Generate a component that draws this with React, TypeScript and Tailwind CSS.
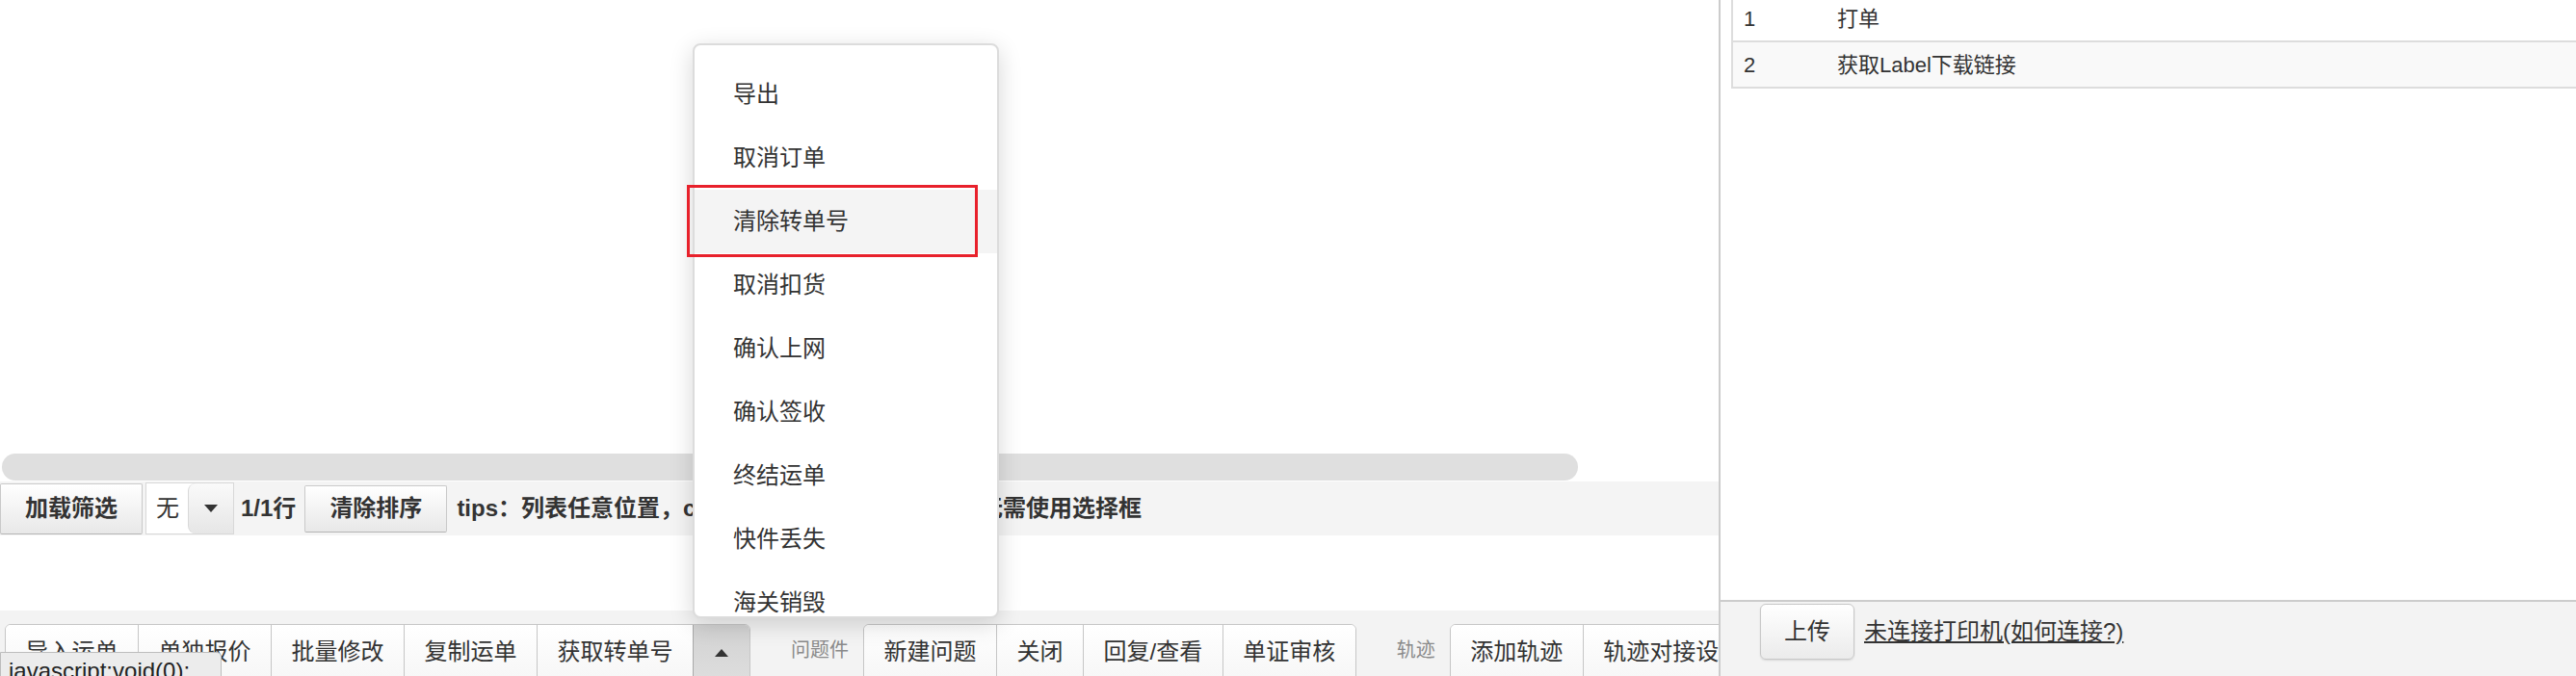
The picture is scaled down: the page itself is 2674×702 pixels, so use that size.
import React from "react";

const MENU = ["导出", "取消订单", "清除转单号", "取消扣货", "确认上网", "确认签收", "终结运单", "快件丢失", "海关销毁"];

const GROUP_ORDER = ["导入运单", "单独报价", "批量修改", "复制运单", "获取转单号"];
const GROUP_ISSUE = ["新建问题", "关闭", "回复/查看", "单证审核"];
const GROUP_TRACK = ["添加轨迹", "轨迹对接设置"];

function Caret({ up }: { up?: boolean }) {
  return (
    <svg width="14" height="8" viewBox="0 0 14 8" className="block">
      <path d={up ? "M7 0L14 8H0Z" : "M0 0H14L7 8Z"} fill="#333" />
    </svg>
  );
}

function ToolGroup({ items, children }: { items: string[]; children?: React.ReactNode }) {
  return (
    <div className="flex shrink-0 h-[62px] border border-[#c6c6c6] rounded-t-[6px] overflow-hidden bg-white">
      {items.map((label, i) => (
        <button
          key={label}
          className={`h-full px-[20.5px] pb-[4px] leading-[26px] text-[24px] text-[#333] bg-linear-to-b from-white to-[#f6f6f6] whitespace-nowrap ${
            i > 0 ? "border-l border-[#c6c6c6]" : ""
          }`}
        >
          {label}
        </button>
      ))}
      {children}
    </div>
  );
}

function ToolLabel({ text }: { text: string }) {
  return (
    <span className="shrink-0 ml-[42px] mr-[15px] mt-[14px] text-[20px] leading-[26px] text-[#8a8a8a] whitespace-nowrap">
      {text}
    </span>
  );
}

export default function App() {
  return (
    <div className="relative w-[2674px] h-[702px] overflow-hidden bg-white flex font-['Liberation_Sans','Noto_Sans_CJK_SC',sans-serif] text-[#333]">
      {/* left: waybill list */}
      <div className="w-[1784px] h-full shrink-0 flex flex-col overflow-hidden">
        <div className="h-[471px] shrink-0" />

        {/* horizontal scrollbar */}
        <div className="h-[28px] shrink-0 ml-[2px] w-[1636px] rounded-full bg-[#dfdfdf]" />

        {/* filter bar */}
        <div className="mt-[1px] h-[56px] shrink-0 bg-[#f4f4f4] flex items-center whitespace-nowrap">
          <button className="h-[53px] px-[25px] border border-[#c9c9c9] border-b-[#b5b5b5] rounded-[2px] bg-linear-to-b from-white to-[#e8e8e8] font-bold text-[24px]">
            加载筛选
          </button>
          <div className="ml-[3px] h-[54px] flex border border-[#d8d8d8] bg-white">
            <span className="w-[43px] pl-[10px] flex items-center text-[24px]">无</span>
            <span className="w-[47px] h-full rounded-l-[8px] border-l border-[#d8d8d8] bg-linear-to-b from-[#fafafa] to-[#e6e6e6] flex items-center justify-center">
              <Caret />
            </span>
          </div>
          <span className="ml-[7px] font-bold text-[24px]">1/1行</span>
          <button className="ml-[9px] h-[49px] px-[25px] border border-[#c9c9c9] border-b-[#b5b5b5] rounded-[2px] bg-linear-to-b from-white to-[#e8e8e8] font-bold text-[24px]">
            清除排序
          </button>
          <span className="ml-[10px] font-bold text-[24px]">
            tips：列表任意位置，ctrl+点击多选、shift+连选，无需使用选择框
          </span>
        </div>

        <div className="h-[78px] shrink-0" />

        {/* bottom action toolbar */}
        <div className="flex-1 bg-[#f3f3f3] pt-[14px] pl-[5px] flex items-start">
          <ToolGroup items={GROUP_ORDER}>
            <button className="w-[59px] h-full border-l border-[#a9a9a9] bg-linear-to-b from-[#d2d2d2] to-[#dedede] flex justify-center pt-[25px]">
              <Caret up />
            </button>
          </ToolGroup>
          <ToolLabel text="问题件" />
          <ToolGroup items={GROUP_ISSUE} />
          <ToolLabel text="轨迹" />
          <ToolGroup items={GROUP_TRACK} />
        </div>
      </div>

      {/* splitter */}
      <div className="w-[2px] h-full shrink-0 bg-[#cccccc]" />

      {/* right: print tasks */}
      <div className="flex-1 h-full flex flex-col">
        <div className="ml-[11px] -mt-[4px] border-l-2 border-[#dddddd] text-[22px]">
          <div className="h-[48px] flex items-center border-b-2 border-[#dddddd]">
            <span className="w-[97px] pl-[11px]">1</span>
            <span className="pl-[11px]">打单</span>
          </div>
          <div className="h-[48px] flex items-center border-b-2 border-[#dddddd] bg-[#f9f9f9]">
            <span className="w-[97px] pl-[11px]">2</span>
            <span className="pl-[11px]">获取Label下载链接</span>
          </div>
        </div>
        <div className="flex-1" />
        <div className="h-[79px] shrink-0 border-t-2 border-[#cccccc] bg-[#f3f3f3] pl-[41px] pt-[2px]">
          <div className="h-[58px] flex items-center">
            <button className="w-[98px] h-[58px] rounded-[6px] border border-[#c8c8c8] bg-linear-to-b from-white to-[#ebebeb] shadow-[0_1px_2px_rgba(0,0,0,0.12)] text-[24px]">
              上传
            </button>
            <a className="ml-[10px] text-[24px] text-[#333] underline whitespace-nowrap" href="#">
              未连接打印机(如何连接?)
            </a>
          </div>
        </div>
      </div>

      {/* opened "more" menu */}
      <div className="absolute left-[719px] top-[45px] w-[318px] h-[597px] bg-white border-2 border-[#dcdcdc] rounded-[8px] shadow-[0_6px_24px_rgba(0,0,0,0.16)] overflow-hidden pt-[18px]">
        {MENU.map((m, i) => (
          <div
            key={m}
            className={`h-[66px] shrink-0 flex items-center pl-[40px] text-[24px] text-[#333] ${i === 2 ? "bg-[#f4f4f4]" : ""}`}
          >
            {m}
          </div>
        ))}
      </div>

      {/* red annotation */}
      <div className="absolute left-[713px] top-[192px] w-[302px] h-[75px] border-[3px] border-[#e8212b]" />

      {/* browser status bubble */}
      <div className="absolute left-0 top-[677px] w-[230px] h-[40px] bg-[#ececec] border border-[#bdbdbd] rounded-tr-[5px] pl-[8px] pt-[4px] text-[24px] leading-[30px] text-[#222] whitespace-nowrap">
        javascript:void(0);
      </div>
    </div>
  );
}
